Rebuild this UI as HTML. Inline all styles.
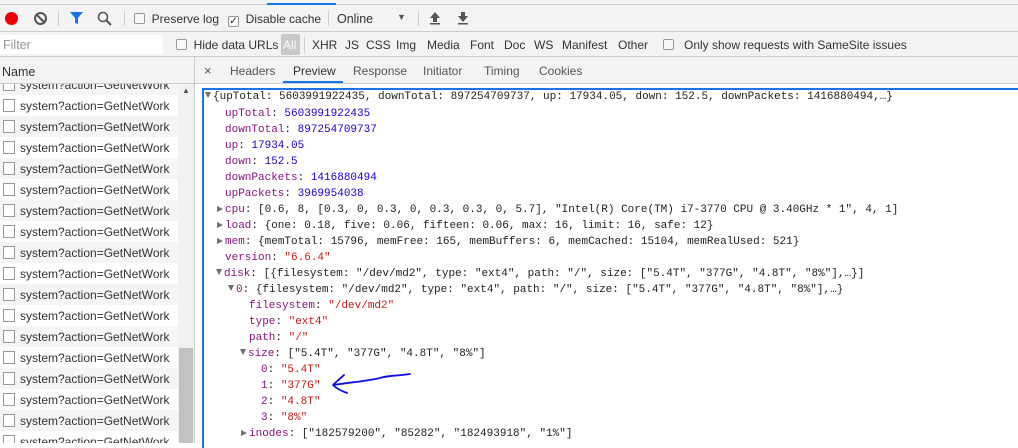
<!DOCTYPE html>
<html><head><meta charset="utf-8"><style>
*{margin:0;padding:0;box-sizing:border-box}
body{width:1018px;height:443px;overflow:hidden;background:#fff;font-family:"Liberation Sans",sans-serif;font-size:12px;color:#333;position:relative}
.abs{position:absolute}
.tb{left:0;top:0;width:1018px;height:32px;background:#f3f3f3;border-bottom:1px solid #ccc}
.fr{left:0;top:32px;width:1018px;height:25px;background:#f3f3f3;border-bottom:1px solid #ccc}
.hd{left:0;top:57px;width:1018px;height:27px;background:#f3f3f3;border-bottom:1px solid #ccc}
.cb{display:inline-block;width:11px;height:11px;border:1px solid #999;border-radius:2px;background:#f8f8f8;vertical-align:-1px}
.t{position:absolute;white-space:nowrap}
.f{position:absolute;white-space:nowrap;top:38px;font-size:12px;color:#333}
.row{position:absolute;left:0;width:178px;height:21px;font-size:12px;color:#333}
.row i{position:absolute;left:3px;top:4px;width:12px;height:13px;border:1px solid #999;background:#fff}
.row span{position:absolute;left:20px;top:4px}
.code{position:absolute;left:202px;top:88px;width:816px;height:360px;border:2px solid #1a73e8;border-right:none;border-bottom:none;font-family:"Liberation Mono",monospace;font-size:11px;color:#222}
.l{position:absolute;white-space:nowrap;height:16px;line-height:16px}
.k{color:#881280}.n{color:#1c00cf}.s{color:#c41a16}
.tri{display:inline-block;width:0;height:0;margin-right:2px}
.dn{border-left:3.5px solid transparent;border-right:3.5px solid transparent;border-top:6px solid #6e6e6e;vertical-align:1px}
.rt{border-top:3.5px solid transparent;border-bottom:3.5px solid transparent;border-left:6px solid #6e6e6e;vertical-align:0px;margin-left:1px}
</style></head><body>
<div class="abs tb"></div>
<div class="abs" style="left:0;top:4px;width:1018px;height:1px;background:#ccc"></div>
<div class="abs" style="left:267px;top:3px;width:69px;height:2px;background:#1a73e8"></div>
<div class="abs" style="left:5px;top:12px;width:13px;height:13px;border-radius:50%;background:#e00"></div>
<svg class="abs" style="left:33px;top:11px" width="15" height="15"><circle cx="7.5" cy="7.5" r="5.5" fill="none" stroke="#555" stroke-width="2"/><line x1="3.5" y1="3.5" x2="11.5" y2="11.5" stroke="#555" stroke-width="2"/></svg>
<div class="abs" style="left:58px;top:11px;width:1px;height:15px;background:#ccc"></div>
<svg class="abs" style="left:69px;top:11px" width="15" height="14"><path d="M1 1H14L9 7V13L6 12V7Z" fill="#1a73e8"/></svg>
<svg class="abs" style="left:97px;top:11px" width="15" height="15"><circle cx="6" cy="6" r="4.5" fill="none" stroke="#555" stroke-width="1.6"/><line x1="9.3" y1="9.3" x2="14" y2="14" stroke="#555" stroke-width="2"/></svg>
<div class="abs" style="left:124px;top:11px;width:1px;height:15px;background:#ccc"></div>
<div class="t" style="left:134px;top:12px;color:#333;font-size:12px"><span class="cb"></span>&nbsp; Preserve log</div>
<div class="t" style="left:228px;top:12px;color:#333;font-size:12px"><span class="cb" style="text-align:center;font-size:10px;line-height:9px">✓</span>&nbsp; Disable cache</div>
<div class="abs" style="left:328px;top:11px;width:1px;height:15px;background:#ccc"></div>
<div class="t" style="left:337px;top:12px;font-size:12.5px;color:#333">Online</div>
<div class="t" style="left:397px;top:12px;font-size:9px;color:#555">▼</div>
<div class="abs" style="left:418px;top:11px;width:1px;height:15px;background:#ccc"></div>
<svg class="abs" style="left:429px;top:11px" width="12" height="14"><path d="M6 1L1 7H4V11H8V7H11Z" fill="#555"/><rect x="1" y="12" width="10" height="1.5" fill="#555"/></svg>
<svg class="abs" style="left:457px;top:11px" width="12" height="14"><path d="M6 11L1 5H4V1H8V5H11Z" fill="#555"/><rect x="1" y="12" width="10" height="1.5" fill="#555"/></svg>

<div class="abs fr"></div>
<div class="abs" style="left:0;top:35px;width:163px;height:19px;background:#fff"></div>
<div class="t" style="left:3px;top:38px;color:#999;font-size:12.5px">Filter</div>
<div class="f" style="left:176px"><span class="cb"></span>&nbsp; Hide data URLs</div>
<div class="abs" style="left:281px;top:34px;width:19px;height:21px;background:#c8c8c8;border-radius:2px"></div>
<div class="t" style="left:283px;top:38px;color:#fff;font-size:12px">All</div>
<div class="abs" style="left:304px;top:37px;width:1px;height:16px;background:#ccc"></div>
<div class="f" style="left:312px">XHR</div>
<div class="f" style="left:345px">JS</div>
<div class="f" style="left:366px">CSS</div>
<div class="f" style="left:396px">Img</div>
<div class="f" style="left:427px">Media</div>
<div class="f" style="left:470px">Font</div>
<div class="f" style="left:504px">Doc</div>
<div class="f" style="left:534px">WS</div>
<div class="f" style="left:562px">Manifest</div>
<div class="f" style="left:618px">Other</div>
<div class="f" style="left:663px"><span class="cb"></span>&nbsp;&nbsp; Only show requests with SameSite issues</div>

<div class="abs hd"></div>
<div class="t" style="left:2px;top:65px;font-size:12.5px;color:#333">Name</div>
<div class="abs" style="left:194px;top:57px;width:1px;height:386px;background:#ccc"></div>
<div class="t" style="left:204px;top:63px;font-size:13px;color:#555">×</div>
<div class="t" style="left:230px;top:64px;font-size:12px;color:#555">Headers</div>
<div class="t" style="left:293px;top:64px;font-size:12px;color:#333">Preview</div>
<div class="abs" style="left:283px;top:81px;width:60px;height:2px;background:#1a73e8"></div>
<div class="t" style="left:353px;top:64px;font-size:12px;color:#555">Response</div>
<div class="t" style="left:423px;top:64px;font-size:12px;color:#555">Initiator</div>
<div class="t" style="left:484px;top:64px;font-size:12px;color:#555">Timing</div>
<div class="t" style="left:539px;top:64px;font-size:12px;color:#555">Cookies</div>

<div class="abs" style="left:0;top:84px;width:194px;height:359px;overflow:hidden">
<div style="position:relative;top:-10px">
<div class="row" style="top:0;background:#f5f5f5"><i></i><span>system?action=GetNetWork</span></div>
<div class="row" style="top:21px"><i></i><span>system?action=GetNetWork</span></div>
<div class="row" style="top:42px;background:#f5f5f5"><i></i><span>system?action=GetNetWork</span></div>
<div class="row" style="top:63px"><i></i><span>system?action=GetNetWork</span></div>
<div class="row" style="top:84px;background:#f5f5f5"><i></i><span>system?action=GetNetWork</span></div>
<div class="row" style="top:105px"><i></i><span>system?action=GetNetWork</span></div>
<div class="row" style="top:126px;background:#f5f5f5"><i></i><span>system?action=GetNetWork</span></div>
<div class="row" style="top:147px"><i></i><span>system?action=GetNetWork</span></div>
<div class="row" style="top:168px;background:#f5f5f5"><i></i><span>system?action=GetNetWork</span></div>
<div class="row" style="top:189px"><i></i><span>system?action=GetNetWork</span></div>
<div class="row" style="top:210px;background:#f5f5f5"><i></i><span>system?action=GetNetWork</span></div>
<div class="row" style="top:231px"><i></i><span>system?action=GetNetWork</span></div>
<div class="row" style="top:252px;background:#f5f5f5"><i></i><span>system?action=GetNetWork</span></div>
<div class="row" style="top:273px"><i></i><span>system?action=GetNetWork</span></div>
<div class="row" style="top:294px;background:#f5f5f5"><i></i><span>system?action=GetNetWork</span></div>
<div class="row" style="top:315px"><i></i><span>system?action=GetNetWork</span></div>
<div class="row" style="top:336px;background:#f5f5f5"><i></i><span>system?action=GetNetWork</span></div>
<div class="row" style="top:357px"><i></i><span>system?action=GetNetWork</span></div>
</div>
<div class="abs" style="left:178px;top:0;width:16px;height:359px;background:#f1f1f1"></div>
<div class="t" style="left:182px;top:2px;font-size:8px;color:#555">▲</div>
<div class="abs" style="left:179px;top:264px;width:14px;height:95px;background:#c1c1c1"></div>
</div>

<div class="code">
<div class="l" style="left:1px;top:-1px"><span class="tri dn"></span>{upTotal: 5603991922435, downTotal: 897254709737, up: 17934.05, down: 152.5, downPackets: 1416880494,…}</div>
<div class="l" style="left:21px;top:16px"><span class="k">upTotal</span>: <span class="n">5603991922435</span></div>
<div class="l" style="left:21px;top:32px"><span class="k">downTotal</span>: <span class="n">897254709737</span></div>
<div class="l" style="left:21px;top:48px"><span class="k">up</span>: <span class="n">17934.05</span></div>
<div class="l" style="left:21px;top:64px"><span class="k">down</span>: <span class="n">152.5</span></div>
<div class="l" style="left:21px;top:80px"><span class="k">downPackets</span>: <span class="n">1416880494</span></div>
<div class="l" style="left:21px;top:96px"><span class="k">upPackets</span>: <span class="n">3969954038</span></div>
<div class="l" style="left:12px;top:112px"><span class="tri rt"></span><span class="k">cpu</span>: [0.6, 8, [0.3, 0, 0.3, 0, 0.3, 0.3, 0, 5.7], "Intel(R) Core(TM) i7-3770 CPU @ 3.40GHz * 1", 4, 1]</div>
<div class="l" style="left:12px;top:128px"><span class="tri rt"></span><span class="k">load</span>: {one: 0.18, five: 0.06, fifteen: 0.06, max: 16, limit: 16, safe: 12}</div>
<div class="l" style="left:12px;top:144px"><span class="tri rt"></span><span class="k">mem</span>: {memTotal: 15796, memFree: 165, memBuffers: 6, memCached: 15104, memRealUsed: 521}</div>
<div class="l" style="left:21px;top:160px"><span class="k">version</span>: <span class="s">"6.6.4"</span></div>
<div class="l" style="left:12px;top:176px"><span class="tri dn"></span><span class="k">disk</span>: [{filesystem: "/dev/md2", type: "ext4", path: "/", size: ["5.4T", "377G", "4.8T", "8%"],…}]</div>
<div class="l" style="left:24px;top:192px"><span class="tri dn"></span><span class="k">0</span>: {filesystem: "/dev/md2", type: "ext4", path: "/", size: ["5.4T", "377G", "4.8T", "8%"],…}</div>
<div class="l" style="left:45px;top:208px"><span class="k">filesystem</span>: <span class="s">"/dev/md2"</span></div>
<div class="l" style="left:45px;top:224px"><span class="k">type</span>: <span class="s">"ext4"</span></div>
<div class="l" style="left:45px;top:240px"><span class="k">path</span>: <span class="s">"/"</span></div>
<div class="l" style="left:36px;top:256px"><span class="tri dn"></span><span class="k">size</span>: ["5.4T", "377G", "4.8T", "8%"]</div>
<div class="l" style="left:57px;top:272px"><span class="k">0</span>: <span class="s">"5.4T"</span></div>
<div class="l" style="left:57px;top:288px"><span class="k">1</span>: <span class="s">"377G"</span></div>
<div class="l" style="left:57px;top:304px"><span class="k">2</span>: <span class="s">"4.8T"</span></div>
<div class="l" style="left:57px;top:320px"><span class="k">3</span>: <span class="s">"8%"</span></div>
<div class="l" style="left:36px;top:336px"><span class="tri rt"></span><span class="k">inodes</span>: ["182579200", "85282", "182493918", "1%"]</div>
</div>
<svg class="abs" style="left:328px;top:370px" width="90" height="30"><path d="M82 4C70 6 62 5 52 8C40 11 25 12 5 15M5 15C10 10 13 8 16 5M5 15C9 19 14 21 19 23" fill="none" stroke="#1010e0" stroke-width="1.8" stroke-linecap="round"/></svg>
</body></html>
